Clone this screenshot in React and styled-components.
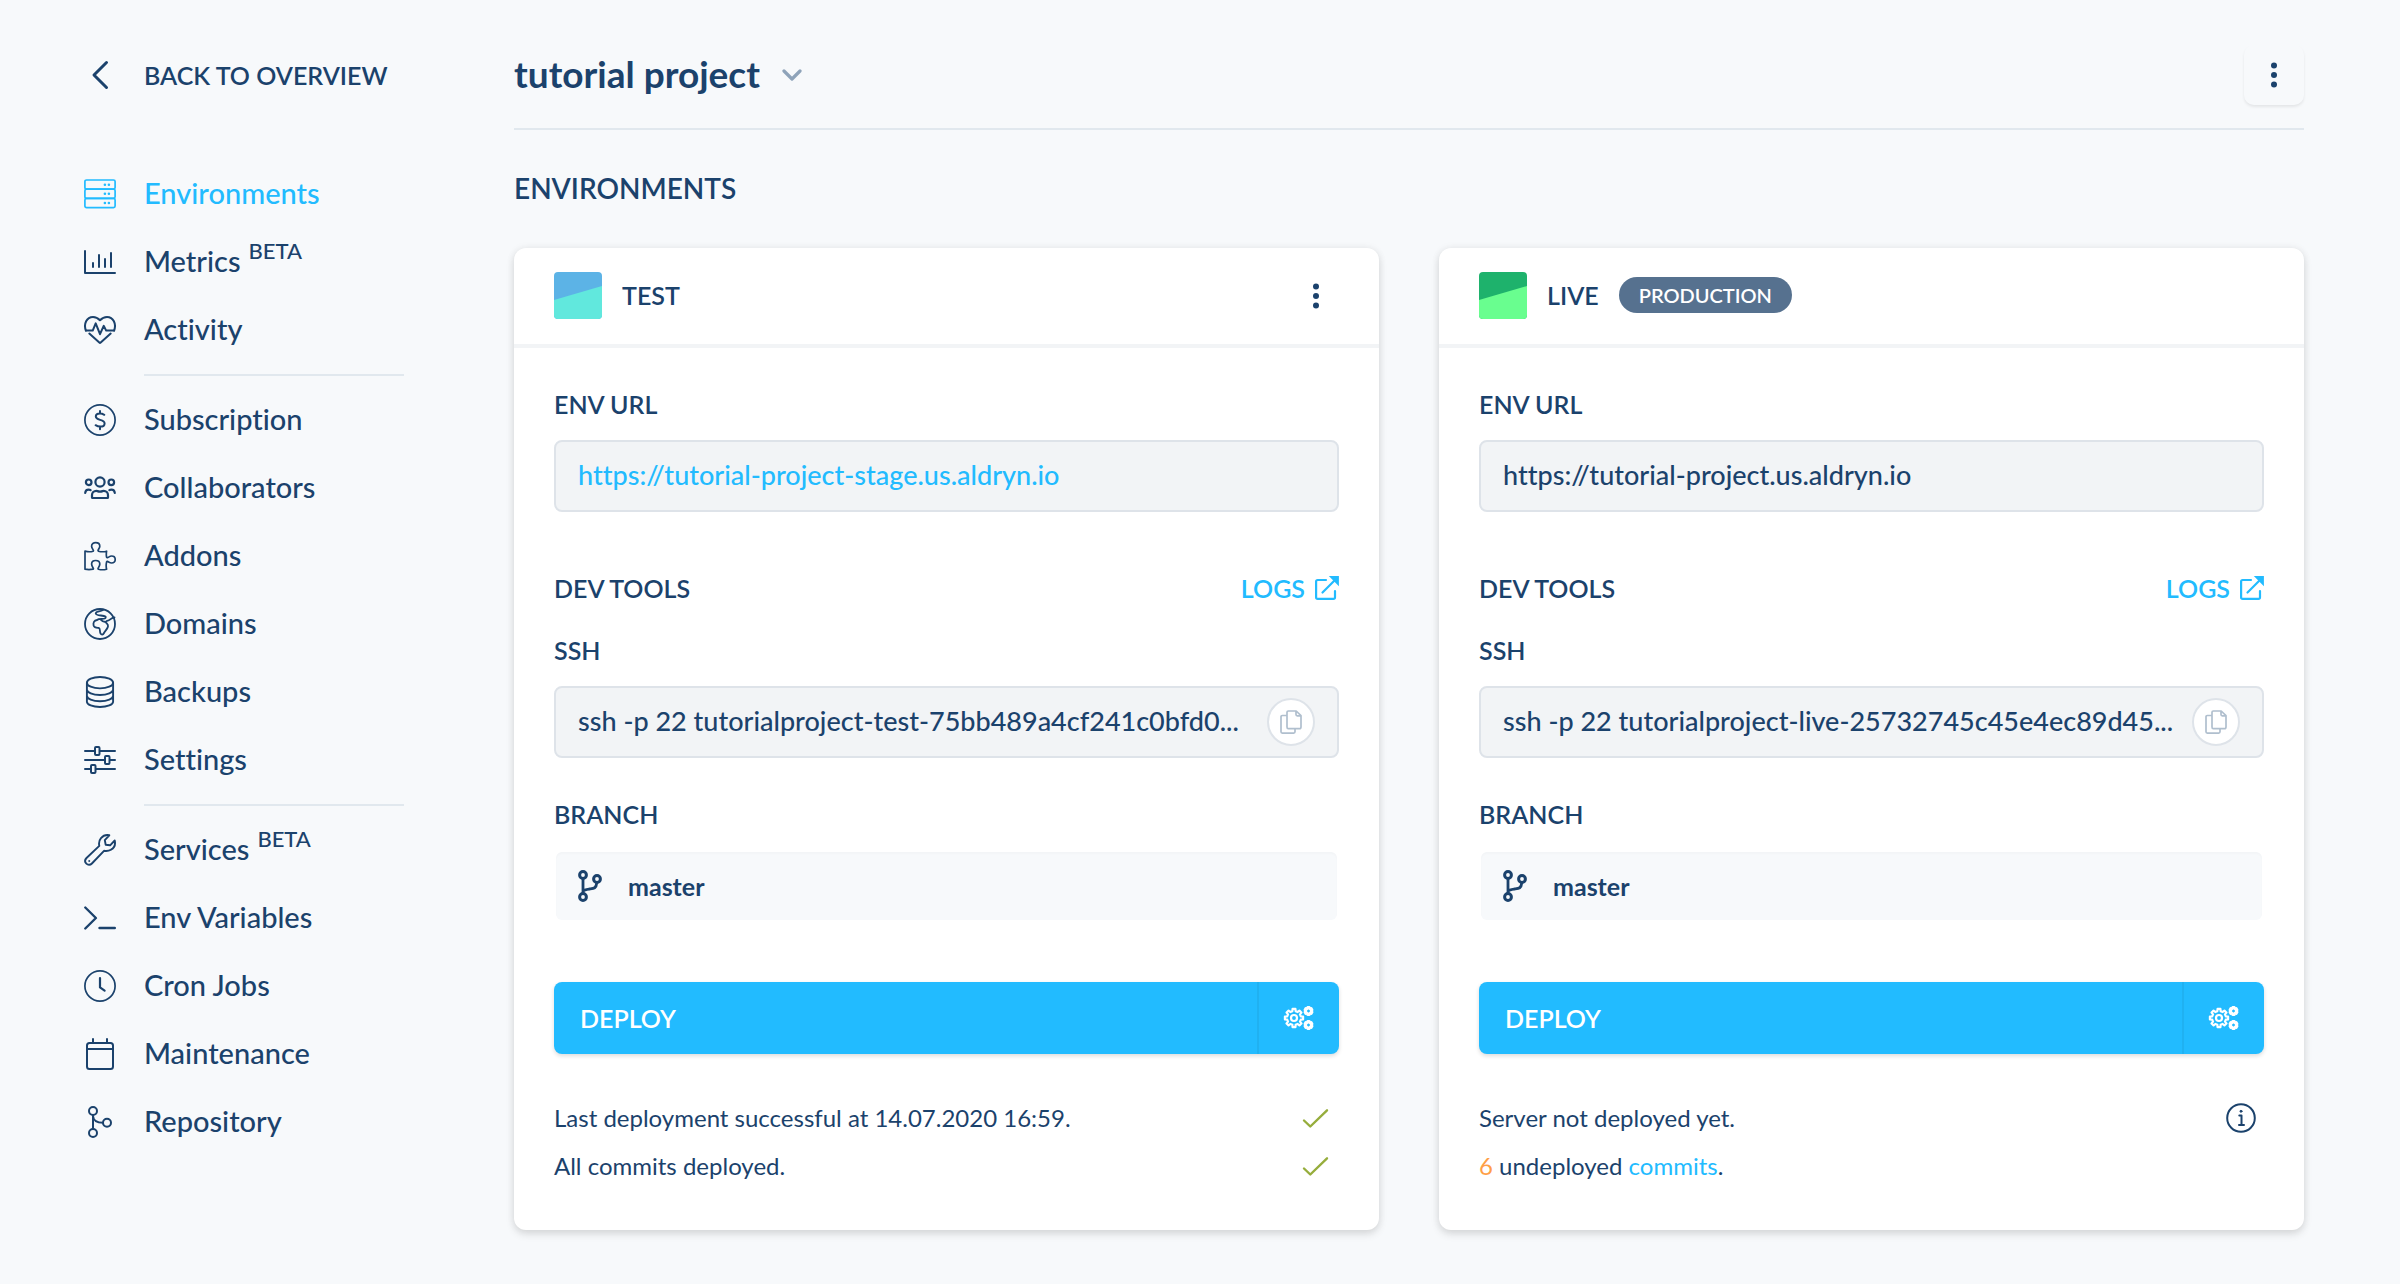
import React from "react";
import styled, { createGlobalStyle } from "styled-components";

const color = {
  ink: "#1b426c",
  accent: "#22bbff",
  page: "#f7f9fb",
  line: "#e1e8ee",
  field: "#f2f4f6",
  fieldLine: "#dee3e9",
  badge: "#56718f",
  muted: "#8ea3b9",
  good: "#96ad3c",
  warn: "#ff9f47",
};

const GlobalStyle = createGlobalStyle`
  *, *::before, *::after { box-sizing: border-box; }
  body {
    margin: 0;
    background: ${color.page};
    color: ${color.ink};
    font-family: Lato, "Open Sans", sans-serif;
    font-size: 24px;
    line-height: 32px;
    font-variant-ligatures: none;
  }
  a { color: inherit; text-decoration: none; }
  h1, h2, h3, p, ul { margin: 0; padding: 0; }
  button, input { font: inherit; color: inherit; }
  button { border: 0; background: none; padding: 0; cursor: pointer; }
  svg { display: block; flex: none; }
`;

const Page = styled.div`
  display: grid;
  grid-template-columns: 320px minmax(0, 1fr);
  column-gap: 110px;
  padding: 0 96px 54px 84px;
`;

/* Sidebar */
const BackLink = styled.a`
  display: flex;
  align-items: center;
  gap: 28px;
  height: 60px;
  margin: 45px 0 55px;
  font-size: 25px;
  font-weight: 600;
`;

const NavGroup = styled.ul`
  list-style: none;
  & + & {
    padding-top: 22px;
    background: linear-gradient(${color.line}, ${color.line}) 60px 10px / 100% 2px no-repeat;
  }
`;

const NavLink = styled.a`
  display: flex;
  align-items: center;
  gap: 28px;
  height: 68px;
  font-size: 29px;
  font-weight: 500;
  color: ${(p) => (p.$active ? color.accent : color.ink)};
`;

const NavText = styled.span`
  padding-bottom: 3px;
`;

const Beta = styled.sup`
  margin-left: 8px;
  font-size: 22px;
  line-height: 0;
  vertical-align: 13px;
`;

/* Main column */
const Header = styled.header`
  display: flex;
  align-items: center;
  justify-content: space-between;
  margin-top: 22px;
  height: 108px;
  border-bottom: 2px solid ${color.line};
`;

const ProjectButton = styled.button`
  display: flex;
  align-items: center;
  gap: 22px;
`;

const Title = styled.h1`
  padding-bottom: 3px;
  font-size: 37px;
  line-height: 44px;
  font-weight: 700;
`;

const MenuButton = styled.button`
  display: grid;
  place-items: center;
  width: ${(p) => (p.$raised ? 60 : 46)}px;
  height: 60px;
  border-radius: 10px;
  box-shadow: ${(p) => (p.$raised ? "0 2px 3px rgba(0, 0, 0, 0.08)" : "none")};
`;

const SectionTitle = styled.h2`
  margin: 40px 0 42px;
  font-size: 28px;
  line-height: 36px;
  font-weight: 600;
`;

const Cards = styled.div`
  display: grid;
  grid-template-columns: repeat(2, minmax(0, 1fr));
  gap: 60px;
`;

const Card = styled.section`
  border-radius: 12px;
  background: #fff;
  box-shadow: 0 4px 8px rgba(0, 0, 0, 0.12), 0 0 8px rgba(0, 0, 0, 0.06);
`;

const CardHeader = styled.div`
  display: flex;
  align-items: center;
  gap: 20px;
  height: 100px;
  padding: 0 40px;
  border-bottom: 4px solid ${color.field};
  ${MenuButton} { margin-left: auto; }
`;

const CardHeading = styled.div`
  display: flex;
  align-items: center;
  gap: 20px;
  padding-bottom: 3px;
`;

const CardTitle = styled.h3`
  font-size: 25px;
  font-weight: 600;
`;

const Badge = styled.span`
  padding: 0 20px;
  border-radius: 18px;
  background: ${color.badge};
  color: #fff;
  font-size: 20px;
  line-height: 36px;
  font-weight: 600;
`;

const CardBody = styled.div`
  padding: 40px;
`;

const Label = styled.label`
  display: block;
  margin-top: ${(p) => p.$top || 0}px;
  margin-bottom: 20px;
  font-size: 25px;
  font-weight: 600;
`;

const ToolsRow = styled.div`
  display: flex;
  align-items: center;
  justify-content: space-between;
  margin: 60px 0 30px;
  font-size: 25px;
  font-weight: 600;
`;

const LogsLink = styled.a`
  display: flex;
  align-items: center;
  gap: 10px;
  color: ${color.accent};
`;

const Field = styled.div`
  display: flex;
  align-items: center;
  height: 72px;
  padding: 0 22px;
  border: 2px solid ${color.fieldLine};
  border-radius: 8px;
  background: ${color.field};
  font-size: 27px;
  font-weight: 500;
`;

const FieldLink = styled.a`
  padding-bottom: 3px;
  color: ${color.accent};
`;

const FieldInput = styled.input`
  flex: 1;
  min-width: 0;
  padding: 0 0 3px;
  border: 0;
  outline: 0;
  background: none;
  font-variant-ligatures: none;
`;

const CopyButton = styled.button`
  display: grid;
  place-items: center;
  flex: none;
  width: 48px;
  height: 48px;
  border: 2px solid ${color.fieldLine};
  border-radius: 50%;
  background: #fff;
`;

const Branch = styled.div`
  display: flex;
  align-items: center;
  gap: 26px;
  height: 68px;
  margin: 22px 2px 62px;
  padding: 0 22px;
  border-radius: 6px;
  background: ${color.page};
  box-shadow: inset 0 2px 2px rgba(0, 0, 0, 0.02);
  font-size: 25px;
  font-weight: 700;
`;

const DeployBar = styled.div`
  display: flex;
  height: 72px;
  border-radius: 8px;
  background: ${color.accent};
  color: #fff;
  box-shadow: 0 2px 4px rgba(0, 0, 0, 0.14);
`;

const DeployButton = styled.button`
  flex: 1;
  padding-left: 26px;
  text-align: left;
  font-size: 25px;
  font-weight: 600;
`;

const DeployOptions = styled.button`
  display: grid;
  place-items: center;
  width: 82px;
  border-left: 2px solid #20b1f1;
`;

const StatusList = styled.div`
  margin-top: 40px;
`;

const Status = styled.div`
  display: flex;
  align-items: center;
  justify-content: space-between;
  height: 48px;
  padding-right: 8px;
`;

const Count = styled.span`
  color: ${color.warn};
`;

const CommitsLink = styled.a`
  color: ${color.accent};
`;

/* Icons */
const Icon = ({ size = 32, w = size, h = size, sw = 2, tint = "currentColor", children }) => (
  <svg
    width={w}
    height={h}
    viewBox={`0 0 ${w} ${h}`}
    fill="none"
    stroke={tint}
    strokeWidth={sw}
    strokeLinecap="round"
    strokeLinejoin="round"
    aria-hidden="true"
  >
    {children}
  </svg>
);

const icons = {
  environments: (
    <Icon sw={1.7}>
      <rect x="0.9" y="2" width="30.2" height="9.2" rx="1.6" />
      <rect x="0.9" y="11.2" width="30.2" height="9.2" rx="1.6" />
      <rect x="0.9" y="20.4" width="30.2" height="9.2" rx="1.6" />
      <path strokeWidth="2.6" d="M20.9 6.8h.01M24.9 6.8h.01M20.9 15.8h.01M24.9 15.8h.01M20.9 25h.01M24.9 25h.01" />
    </Icon>
  ),
  metrics: (
    <Icon>
      <path d="M1 5v22h30M9 17v4M15 9v12M21 13v8M27 7v14" />
    </Icon>
  ),
  activity: (
    <Icon sw={2}>
      <path d="M1.9 16.6C-.6 10 2.600 2.900 9 2.900c3 0 5.200 1.400 7 3.300 1.800-1.900 4-3.300 7-3.300 6.400 0 9.600 7.100 7.100 13.700" />
      <path d="M1.900 16.600h6.800l3-7.200L16 20.200l3.700-8.400 2.500 4.800h7.900M5.300 19.600l10 9q.7.6 1.400 0l10-9" />
    </Icon>
  ),
  subscription: (
    <Icon sw={1.7}>
      <circle cx="16" cy="16" r="15.100" />
      <path strokeWidth="2" d="M20.300 10.800c-1.600-.9-2.700-1.200-4.300-1.200-2.400 0-4.200 1.100-4.200 3 0 4.200 8.800 2.300 8.800 6.800 0 2-1.900 3.200-4.400 3.200-1.700 0-3.100-.4-4.600-1.400M16 7v2.600M16 22.600v2.600" />
    </Icon>
  ),
  collaborators: (
    <Icon sw={2.200}>
      <circle cx="16" cy="10" r="4.600" />
      <circle cx="4.700" cy="10.300" r="2.800" />
      <circle cx="27.300" cy="10.300" r="2.800" />
      <path d="M8 25.400v-2.300c0-2.400 1.900-4.300 4.300-4.300.9 0 1.700.9 3.700.9s2.800-.9 3.700-.9c2.400 0 4.300 1.900 4.300 4.300v2.300q0 .6-.6.600H8.600q-.6 0-.6-.6zM1.200 21c.2-2 1.400-3.400 3.400-3.400 1 0 1.400.1 2 .5M30.800 21c-.2-2-1.400-3.400-3.400-3.400-1 0-1.400.1-2 .5" />
    </Icon>
  ),
  addons: (
    <Icon sw={1.700}>
      <path d="M1 11.200c3 .7 6 .7 8 0 1.400-.8-1.400-2.700-1.400-5 0-4.800 8.200-4.800 8.200 0 0 2.300-2.800 4.200-1.300 5 2.500.7 5.500.7 8.100 0-.4 2.300-.4 4.300 0 6 .8 1.700 2.400-1.200 5-1.200 4.800 0 4.800 7 0 7-2.600 0-4.200-2.600-5-1.100-.6 2.500-.6 4.900 0 7.300-2.600.7-5.600.7-8.100 0-1.500-.8 1.300-2.200 1.300-5.200 0-4.700-8.200-4.700-8.200 0 0 3 2.800 4.400 1.400 5.200-3 .7-5 .7-8 0z" />
    </Icon>
  ),
  domains: (
    <Icon sw={1.800}>
      <circle cx="16" cy="16" r="15" />
      <path d="M19 2c-3 2-7 1-7.300 3.500C12 8 19 7 21.500 8.500c1 2-1.500 2.500-4 2.300-2 0-3.500.2-4.500 1.200-3 .3-4 3-3.400 5.500.9 2.800 3.400 2.300 5.400 2.500 1.300.5.500 3 1.500 5.500 1 1.500 2.500 1.500 3.500-.5s3.500-4 4-6.500c.5-2-1-2.500-2.500-4.500M16.500 11.500q2 2.500 5 2.500 1-1.500 3-1.700c2.500-.5 3-3 6-2.800" />
    </Icon>
  ),
  backups: (
    <Icon sw={1.900}>
      <ellipse cx="16" cy="6.700" rx="13.100" ry="5.700" />
      <path d="M2.900 6.700v19c0 3 5.800 5.300 13.100 5.300s13.100-2.300 13.100-5.300v-19M2.900 13.500C2.900 16.600 8.700 19 16 19s13.100-2.400 13.100-5.500M2.900 19.800c0 3.100 5.800 5.500 13.100 5.500s13.100-2.400 13.100-5.500" />
    </Icon>
  ),
  settings: (
    <Icon>
      <path d="M1 7h9.500M16 7h15M1 16h19M26 16h5M1 25h5M12 25h19" />
      <rect x="11" y="3" width="4.500" height="8" rx="1" />
      <rect x="21" y="12" width="4.500" height="8" rx="1" />
      <rect x="7" y="21" width="4.500" height="8" rx="1" />
    </Icon>
  ),
  services: (
    <Icon sw={1.900}>
      <path d="M25.300 1.300 20.800 6.100l.9 4.600 4.400.6 4.600-4.800c1 4.200-.6 7.500-3.700 9.200-2.400 1.400-4.700 1.500-7 1.100L7.900 29.500c-3.700 3.800-9.200-1.600-5.400-5.500L15.300 11.900c-.6-2.800-.3-5.500 1.700-7.800s5-3.500 8.300-2.800z" />
      <circle cx="5.100" cy="27" r="0.5" strokeWidth="1" />
    </Icon>
  ),
  env: (
    <Icon sw={2.400}>
      <path d="m1.300 5.500 10.600 10.500L1.300 26.500M15.500 26h15.300" />
    </Icon>
  ),
  cron: (
    <Icon sw={1.700}>
      <circle cx="16" cy="16" r="15.100" />
      <path strokeWidth="2.200" d="M16 8v9.400l4.600 3.200" />
    </Icon>
  ),
  maintenance: (
    <Icon>
      <rect x="3" y="5" width="26" height="26" rx="2.500" />
      <path d="M3 11h26M9 1v4M23 1v4" />
    </Icon>
  ),
  repository: (
    <Icon sw={2}>
      <circle cx="9" cy="5" r="4" />
      <circle cx="9" cy="27" r="4" />
      <circle cx="23" cy="16.700" r="4" />
      <path d="M9 9v14M9 10c.3 4.500 4 6.700 10 6.700" />
    </Icon>
  ),
};

const gear = (cx, cy, teeth, outer, inner) => {
  const points = [];
  const step = (Math.PI * 2) / teeth;
  for (let i = 0; i < teeth; i += 1) {
    [[-0.2, outer], [0.2, outer], [0.3, inner], [0.7, inner]].forEach(([t, r]) => {
      const a = (i + t) * step - Math.PI / 2;
      points.push(`${(cx + r * Math.cos(a)).toFixed(2)} ${(cy + r * Math.sin(a)).toFixed(2)}`);
    });
  }
  return `M${points.join("L")}Z`;
};

const Gears = () => (
  <Icon w={32} h={24} sw={2.200}>
    <path d={gear(11, 12, 8, 9.2, 7)} />
    <circle cx="11" cy="12" r="3" />
    <path strokeWidth="2.800" d={gear(25.500, 5, 6, 3.7, 2.8)} />
    <path strokeWidth="2.800" d={gear(25.500, 19, 6, 3.7, 2.8)} />
  </Icon>
);

const Dots = () => (
  <svg width="6" height="26" viewBox="0 0 6 26" fill="currentColor" aria-hidden="true">
    <circle cx="3" cy="3.500" r="3" />
    <circle cx="3" cy="13" r="3" />
    <circle cx="3" cy="22.500" r="3" />
  </svg>
);

const External = () => (
  <Icon size={24} sw={2.200}>
    <path d="M11 4H2.700Q1.100 4 1.100 5.600v15.700q0 1.600 1.600 1.600h15.700q1.600 0 1.600-1.600V15M7.500 16.500 21 3" />
    <path d="M16 1h7v7z" fill="currentColor" strokeWidth="1.800" strokeLinejoin="miter" />
  </Icon>
);

const Copy = () => (
  <Icon w={22} h={24} sw={1.700} tint="#b0bfce">
    <path d="M8.300 1h7.900L21 5.600v11.300q0 1.700-1.700 1.700h-11q-1.300 0-1.300-1.700V2.300Q7 1 8.300 1zM16 1v3.500q0 1.300 1.300 1.300H21M7 5.500H2.300Q1 5.500 1 6.800v15q0 1.300 1.300 1.300h11.400q1.300 0 1.300-1.300V19" />
  </Icon>
);

const BranchIcon = () => (
  <Icon w={24} h={32} sw={3}>
    <circle cx="5" cy="5" r="3.400" />
    <circle cx="19" cy="9" r="3.400" />
    <circle cx="5" cy="27" r="3.400" />
    <path strokeWidth="2.800" d="M5 9v14M18.700 13c-.5 5.500-3 5.500-7 6-3 .4-5.500.6-6.500 2.200" />
  </Icon>
);

const Check = () => (
  <Icon size={30} sw={2.400} tint={color.good}>
    <path d="m3 17.500 6.300 6L26 7.300" />
  </Icon>
);

const Info = () => (
  <Icon size={30}>
    <circle cx="15" cy="15" r="13.800" />
    <path d="M13.300 12.500h2.200v9.200M13 22h5" />
    <circle cx="15" cy="8.300" r="1" fill="currentColor" strokeWidth="1" />
  </Icon>
);

/* Data */
const navGroups = [
  [
    { icon: "environments", text: "Environments", active: true },
    { icon: "metrics", text: "Metrics", beta: true },
    { icon: "activity", text: "Activity" },
  ],
  [
    { icon: "subscription", text: "Subscription" },
    { icon: "collaborators", text: "Collaborators" },
    { icon: "addons", text: "Addons" },
    { icon: "domains", text: "Domains" },
    { icon: "backups", text: "Backups" },
    { icon: "settings", text: "Settings" },
  ],
  [
    { icon: "services", text: "Services", beta: true },
    { icon: "env", text: "Env Variables" },
    { icon: "cron", text: "Cron Jobs" },
    { icon: "maintenance", text: "Maintenance" },
    { icon: "repository", text: "Repository" },
  ],
];

const Emblem = ({ top, bottom }) => (
  <svg width="48" height="48" viewBox="0 0 48 48" aria-hidden="true">
    <rect width="48" height="47" rx="4" fill={top} />
    <path d="M0 28 48 14v29q0 4-4 4H4q-4 0-4-4z" fill={bottom} />
  </svg>
);

function Environment({ id, name, emblem, badge, menu, url, linked, ssh, children }) {
  return (
    <Card aria-label={name}>
      <CardHeader>
        <Emblem {...emblem} />
        <CardHeading>
          <CardTitle>{name}</CardTitle>
          {badge && <Badge>{badge}</Badge>}
        </CardHeading>
        {menu && (
          <MenuButton type="button" aria-label="Environment menu">
            <Dots />
          </MenuButton>
        )}
      </CardHeader>
      <CardBody>
        <Label as={linked ? "div" : "label"} htmlFor={linked ? undefined : `${id}-url`}>
          ENV URL
        </Label>
        <Field>
          {linked ? (
            <FieldLink href="#url">{url}</FieldLink>
          ) : (
            <FieldInput id={`${id}-url`} readOnly value={url} />
          )}
        </Field>
        <ToolsRow>
          <span>DEV TOOLS</span>
          <LogsLink href="#logs">
            LOGS
            <External />
          </LogsLink>
        </ToolsRow>
        <Label htmlFor={`${id}-ssh`}>SSH</Label>
        <Field>
          <FieldInput id={`${id}-ssh`} readOnly value={ssh} />
          <CopyButton type="button" aria-label="Copy SSH command">
            <Copy />
          </CopyButton>
        </Field>
        <Label as="div" $top={40}>
          BRANCH
        </Label>
        <Branch>
          <BranchIcon />
          master
        </Branch>
        <DeployBar>
          <DeployButton type="button">DEPLOY</DeployButton>
          <DeployOptions type="button" aria-label="Deploy options">
            <Gears />
          </DeployOptions>
        </DeployBar>
        <StatusList>{children}</StatusList>
      </CardBody>
    </Card>
  );
}

export default function App() {
  return (
    <>
      <GlobalStyle />
      <Page>
        <aside>
          <BackLink href="#overview">
            <Icon sw={3}>
              <path d="M22.500 3.500 10 16l12.500 12.500" />
            </Icon>
            BACK TO OVERVIEW
          </BackLink>
          <nav>
            {navGroups.map((group) => (
              <NavGroup key={group[0].icon}>
                {group.map((item) => (
                  <li key={item.icon}>
                    <NavLink href={`#${item.icon}`} $active={item.active}>
                      {icons[item.icon]}
                      <NavText>
                        {item.text}
                        {item.beta && <Beta>BETA</Beta>}
                      </NavText>
                    </NavLink>
                  </li>
                ))}
              </NavGroup>
            ))}
          </nav>
        </aside>
        <main>
          <Header>
            <ProjectButton type="button">
              <Title>tutorial project</Title>
              <Icon w={20} h={12} sw={3.200} tint={color.muted}>
                <path d="m2 2 8 8 8-8" />
              </Icon>
            </ProjectButton>
            <MenuButton type="button" $raised aria-label="Project menu">
              <Dots />
            </MenuButton>
          </Header>
          <SectionTitle>ENVIRONMENTS</SectionTitle>
          <Cards>
            <Environment
              id="test"
              name="TEST"
              emblem={{ top: "#5cb3e6", bottom: "#61e8dd" }}
              menu
              linked
              url="https://tutorial-project-stage.us.aldryn.io"
              ssh="ssh -p 22 tutorialproject-test-75bb489a4cf241c0bfd0..."
            >
              <Status>
                <span>Last deployment successful at 14.07.2020 16:59.</span>
                <Check />
              </Status>
              <Status>
                <span>All commits deployed.</span>
                <Check />
              </Status>
            </Environment>
            <Environment
              id="live"
              name="LIVE"
              emblem={{ top: "#1eb26c", bottom: "#69fe8f" }}
              badge="PRODUCTION"
              url="https://tutorial-project.us.aldryn.io"
              ssh="ssh -p 22 tutorialproject-live-25732745c45e4ec89d45..."
            >
              <Status>
                <span>Server not deployed yet.</span>
                <Info />
              </Status>
              <Status>
                <span>
                  <Count>6</Count> undeployed <CommitsLink href="#commits">commits</CommitsLink>.
                </span>
              </Status>
            </Environment>
          </Cards>
        </main>
      </Page>
    </>
  );
}
